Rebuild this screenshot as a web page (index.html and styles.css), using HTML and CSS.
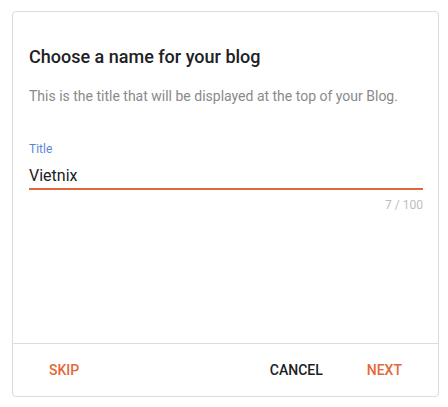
FILE: index.html
```html
<!DOCTYPE html>
<html>
<head>
<meta charset="utf-8">
<link rel="stylesheet" href="styles.css">
</head>
<body>
<div class="card">
  <div class="card-body">
    <h1 class="title">Choose a name for your blog</h1>
    <p class="desc">This is the title that will be displayed at the top of your Blog.</p>
    <div class="field">
      <label class="label">Title</label>
      <div class="input">Vietnix</div>
      <div class="counter">7 / 100</div>
    </div>
  </div>
  <div class="card-footer">
    <button class="btn btn-accent">SKIP</button>
    <div class="spacer"></div>
    <button class="btn btn-plain">CANCEL</button>
    <button class="btn btn-accent">NEXT</button>
  </div>
</div>
</body>
</html>
```

FILE: styles.css
```css
html, body {
  margin: 0;
  padding: 0;
  background: #ffffff;
}
body {
  font-family: Roboto, "Liberation Sans", Arial, sans-serif;
  padding: 11px 0 0 12px;
}
.card {
  box-sizing: border-box;
  width: 427px;
  height: 386px;
  border: 1px solid #dadce0;
  border-radius: 4px;
  display: flex;
  flex-direction: column;
  background: #fff;
}
.card-body {
  flex: 1;
  padding: 33px 15px 0 16px;
}
.title {
  margin: 0;
  font-size: 18px;
  line-height: 24px;
  font-weight: 500;
  color: #202124;
}
.desc {
  margin: 17px 0 0;
  font-size: 14px;
  line-height: 20px;
  color: #8a8a8a;
}
.field {
  margin-top: 35px;
}
.label {
  display: block;
  font-size: 12px;
  line-height: 16px;
  color: #5a85d6;
}
.input {
  margin-top: 7px;
  font-size: 16px;
  line-height: 24px;
  color: #202124;
  border-bottom: 2px solid #e2683c;
}
.counter {
  margin-top: 7px;
  font-size: 12px;
  line-height: 16px;
  color: #bdbdbd;
  text-align: right;
}
.card-footer {
  border-top: 1px solid #dadce0;
  display: flex;
  align-items: center;
  height: 53px;
  box-sizing: border-box;
  padding: 0 20px;
  gap: 12px;
}
.spacer {
  flex: 1;
}
.btn {
  background: none;
  border: none;
  font-family: inherit;
  font-size: 14px;
  line-height: 20px;
  font-weight: 500;
  padding: 8px 16px;
  margin: 0;
  cursor: pointer;
}
.btn-accent {
  color: #e4683a;
}
.btn-plain {
  color: #202124;
}
```
